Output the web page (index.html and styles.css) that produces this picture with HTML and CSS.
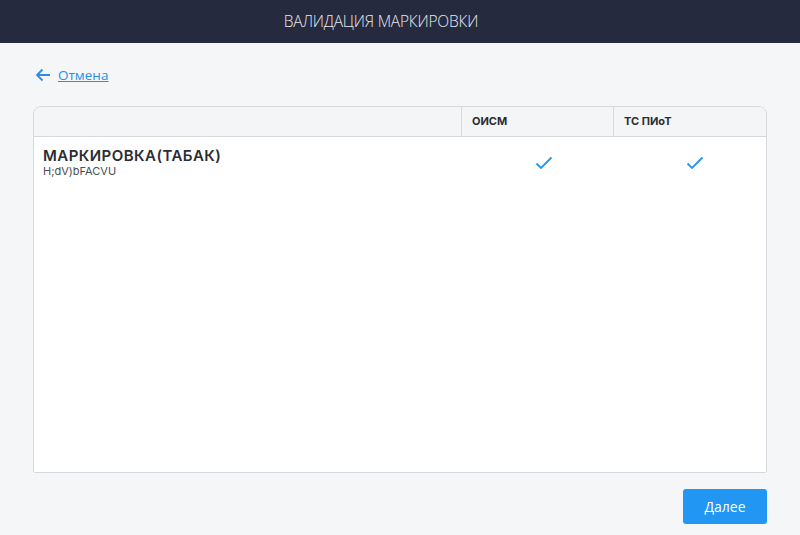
FILE: index.html
```html
<!DOCTYPE html>
<html>
<head>
    <meta charset="utf-8">
    <title>Валидация маркировки</title>
    <link rel="stylesheet" href="styles.css">
</head>
<body>
<div class="header">ВАЛИДАЦИЯ МАРКИРОВКИ</div>

<div class="content">
    <a class="back-link" href="#">
        <svg width="16" height="14" viewBox="0 0 16 14">
            <path d="M15 7H2M7.5 1.5L2 7l5.5 5.5" fill="none" stroke="#2a8fe3" stroke-width="1.8"/>
        </svg>
        <span>Отмена</span>
    </a>

    <div class="table">
        <div class="table-head">
            <div class="cell cell-name"></div>
            <div class="cell cell-col">ОИСМ</div>
            <div class="cell cell-col">ТС ПИоТ</div>
        </div>
        <div class="table-row">
            <div class="cell cell-name">
                <div class="row-title">МАРКИРОВКА(ТАБАК)</div>
                <div class="row-code">H;dV)bFACVU</div>
            </div>
            <div class="cell cell-col cell-check">
                <svg width="18" height="14" viewBox="0 0 18 14"><path d="M1.5 7.5l4.5 4.5L16.5 1.5" fill="none" stroke="#2196f3" stroke-width="1.8"/></svg>
            </div>
            <div class="cell cell-col cell-check">
                <svg width="18" height="14" viewBox="0 0 18 14"><path d="M1.5 7.5l4.5 4.5L16.5 1.5" fill="none" stroke="#2196f3" stroke-width="1.8"/></svg>
            </div>
        </div>
    </div>

    <div class="actions">
        <button class="next-button">Далее</button>
    </div>
</div>
</body>
</html>
```

FILE: styles.css
```css
body {
    margin: 0;
    background-color: #f5f6f8;
    font-family: "Open Sans", Arial, sans-serif;
}

.header {
    height: 43px;
    line-height: 42px;
    padding-right: 38px;
    background-color: #262a3e;
    color: #e8e9ee;
    text-align: center;
    font-size: 15.5px;
    font-weight: 300;
    letter-spacing: -0.2px;
}

.content {
    padding: 0 33px;
}

.back-link {
    display: inline-flex;
    align-items: center;
    gap: 7px;
    margin-top: 22px;
    margin-left: 2px;
    height: 20px;
    color: #2a8fe3;
    font-size: 13.5px;
}

.back-link span {
    text-decoration: underline;
}

.table {
    margin-top: 19px;
    height: 365px;
    background-color: #ffffff;
    border: 1px solid #d7d9de;
    border-radius: 8px 8px 2px 2px;
    overflow: hidden;
}

.table-head {
    display: flex;
    height: 29px;
    background-color: #f4f5f7;
    border-bottom: 1px solid #d7d9de;
}

.table-row {
    display: flex;
}

.cell-name {
    width: 427px;
    padding-left: 9px;
}

.cell-col {
    width: 152px;
}

.table-head .cell {
    border-right: 1px solid #d7d9de;
    box-sizing: border-box;
}

.table-head .cell-name {
    width: 428px;
}

.table-head .cell-col {
    padding-left: 10px;
    line-height: 29px;
    font-family: Inter, "Noto Sans", sans-serif;
    font-size: 11px;
    font-weight: 700;
    color: #2b2d33;
}

.table-head .cell:last-child {
    border-right: none;
    flex: 1;
}

.row-title {
    margin-top: 9px;
    font-family: Inter, "Noto Sans", sans-serif;
    font-size: 15px;
    font-weight: 600;
    color: #2b2d33;
    letter-spacing: 0.45px;
}

.row-code {
    font-family: Inter, "Noto Sans", sans-serif;
    font-size: 11px;
    color: #4a4d55;
    margin-top: -1px;
}

.cell-check {
    display: flex;
    justify-content: center;
    padding-top: 19px;
    padding-left: 8px;
    box-sizing: border-box;
}

.actions {
    display: flex;
    justify-content: flex-end;
    margin-top: 16px;
}

.next-button {
    width: 84px;
    height: 35px;
    background-color: #2196f3;
    border: none;
    border-radius: 3px;
    color: #ffffff;
    font-family: "Open Sans", Arial, sans-serif;
    font-size: 14px;
    cursor: pointer;
}
```
